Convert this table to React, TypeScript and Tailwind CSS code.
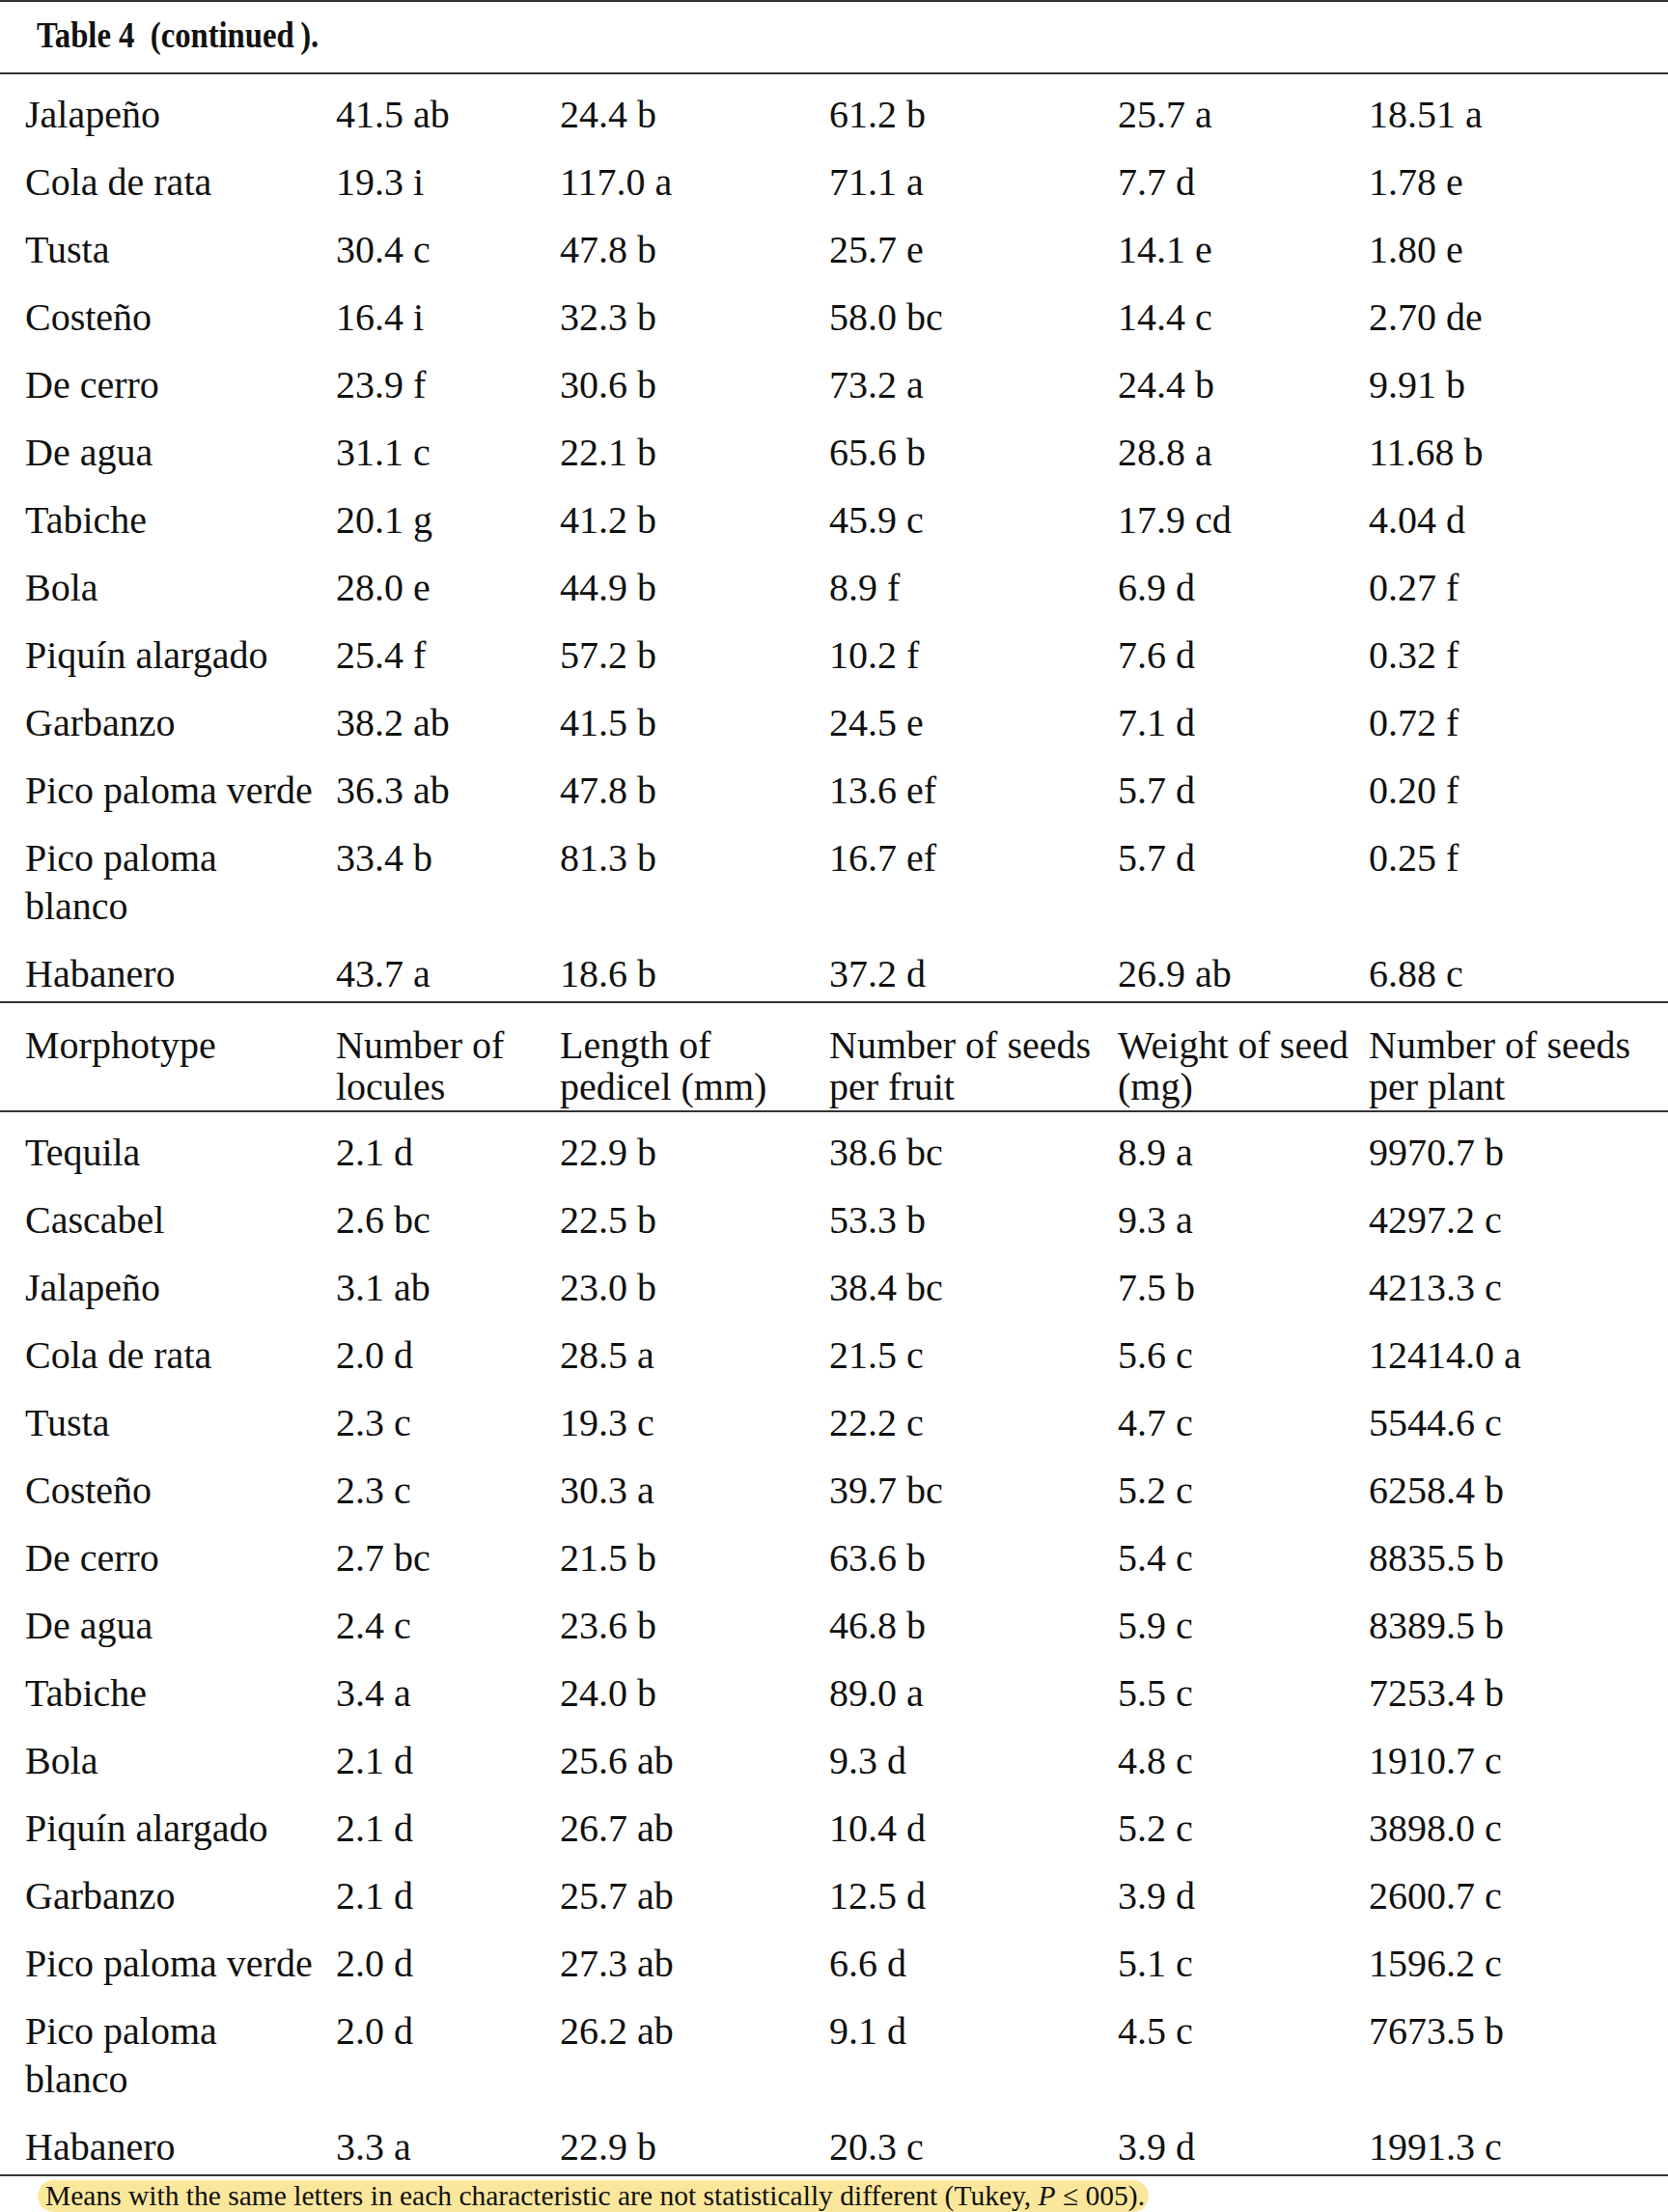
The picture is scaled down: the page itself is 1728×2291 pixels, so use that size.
import React from 'react';

type Row = { name: string[]; vals: string[] };

const top: Row[] = [
  { name: ['Jalapeño'], vals: ['41.5 ab', '24.4 b', '61.2 b', '25.7 a', '18.51 a'] },
  { name: ['Cola de rata'], vals: ['19.3 i', '117.0 a', '71.1 a', '7.7 d', '1.78 e'] },
  { name: ['Tusta'], vals: ['30.4 c', '47.8 b', '25.7 e', '14.1 e', '1.80 e'] },
  { name: ['Costeño'], vals: ['16.4 i', '32.3 b', '58.0 bc', '14.4 c', '2.70 de'] },
  { name: ['De cerro'], vals: ['23.9 f', '30.6 b', '73.2 a', '24.4 b', '9.91 b'] },
  { name: ['De agua'], vals: ['31.1 c', '22.1 b', '65.6 b', '28.8 a', '11.68 b'] },
  { name: ['Tabiche'], vals: ['20.1 g', '41.2 b', '45.9 c', '17.9 cd', '4.04 d'] },
  { name: ['Bola'], vals: ['28.0 e', '44.9 b', '8.9 f', '6.9 d', '0.27 f'] },
  { name: ['Piquín alargado'], vals: ['25.4 f', '57.2 b', '10.2 f', '7.6 d', '0.32 f'] },
  { name: ['Garbanzo'], vals: ['38.2 ab', '41.5 b', '24.5 e', '7.1 d', '0.72 f'] },
  { name: ['Pico paloma verde'], vals: ['36.3 ab', '47.8 b', '13.6 ef', '5.7 d', '0.20 f'] },
  { name: ['Pico paloma', 'blanco'], vals: ['33.4 b', '81.3 b', '16.7 ef', '5.7 d', '0.25 f'] },
  { name: ['Habanero'], vals: ['43.7 a', '18.6 b', '37.2 d', '26.9 ab', '6.88 c'] },
];

const bottom: Row[] = [
  { name: ['Tequila'], vals: ['2.1 d', '22.9 b', '38.6 bc', '8.9 a', '9970.7 b'] },
  { name: ['Cascabel'], vals: ['2.6 bc', '22.5 b', '53.3 b', '9.3 a', '4297.2 c'] },
  { name: ['Jalapeño'], vals: ['3.1 ab', '23.0 b', '38.4 bc', '7.5 b', '4213.3 c'] },
  { name: ['Cola de rata'], vals: ['2.0 d', '28.5 a', '21.5 c', '5.6 c', '12414.0 a'] },
  { name: ['Tusta'], vals: ['2.3 c', '19.3 c', '22.2 c', '4.7 c', '5544.6 c'] },
  { name: ['Costeño'], vals: ['2.3 c', '30.3 a', '39.7 bc', '5.2 c', '6258.4 b'] },
  { name: ['De cerro'], vals: ['2.7 bc', '21.5 b', '63.6 b', '5.4 c', '8835.5 b'] },
  { name: ['De agua'], vals: ['2.4 c', '23.6 b', '46.8 b', '5.9 c', '8389.5 b'] },
  { name: ['Tabiche'], vals: ['3.4 a', '24.0 b', '89.0 a', '5.5 c', '7253.4 b'] },
  { name: ['Bola'], vals: ['2.1 d', '25.6 ab', '9.3 d', '4.8 c', '1910.7 c'] },
  { name: ['Piquín alargado'], vals: ['2.1 d', '26.7 ab', '10.4 d', '5.2 c', '3898.0 c'] },
  { name: ['Garbanzo'], vals: ['2.1 d', '25.7 ab', '12.5 d', '3.9 d', '2600.7 c'] },
  { name: ['Pico paloma verde'], vals: ['2.0 d', '27.3 ab', '6.6 d', '5.1 c', '1596.2 c'] },
  { name: ['Pico paloma', 'blanco'], vals: ['2.0 d', '26.2 ab', '9.1 d', '4.5 c', '7673.5 b'] },
  { name: ['Habanero'], vals: ['3.3 a', '22.9 b', '20.3 c', '3.9 d', '1991.3 c'] },
];

const headers = [
  ['Morphotype'],
  ['Number of', 'locules'],
  ['Length of', 'pedicel (mm)'],
  ['Number of seeds', 'per fruit'],
  ['Weight of seed', '(mg)'],
  ['Number of seeds', 'per plant'],
];

const grid = 'grid grid-cols-[348px_232px_279px_299px_260px_1fr]';

const Rule = () => <div className="h-[2px] w-full bg-[#333]" />;

function Lines({ lines }: { lines: string[] }) {
  return (
    <>
      {lines.map((l, i) => (
        <div key={i} className="whitespace-nowrap">{l}</div>
      ))}
    </>
  );
}

function Body({ rows }: { rows: Row[] }) {
  return (
    <div>
      {rows.map((r, i) => (
        <div key={i} className={`${grid} pt-[17px] pb-[3px]`}>
          <div className="pl-[26px]"><Lines lines={r.name} /></div>
          {r.vals.map((v, j) => (
            <div key={j} className="whitespace-nowrap">{v}</div>
          ))}
        </div>
      ))}
    </div>
  );
}

export default function App() {
  return (
    <div className="w-[1728px] h-[2291px] bg-white text-[#111] font-['Liberation_Serif',serif] text-[40px] leading-[50px] overflow-hidden">
      <Rule />
      <div className="h-[73px] flex items-center pl-[38px] pb-[6px]">
        <span className="inline-block origin-left scale-x-[0.86] font-bold text-[38px] leading-none">
          Table 4&nbsp; (continued&thinsp;).
        </span>
      </div>
      <Rule />
      <Body rows={top} />
      <Rule />
      <div className={`${grid} pt-[22px] pb-[3px] leading-[43px]`}>
        {headers.map((h, i) => (
          <div key={i} className={i === 0 ? 'pl-[26px]' : ''}><Lines lines={h} /></div>
        ))}
      </div>
      <Rule />
      <Body rows={bottom} />
      <Rule />
      <div className="mt-[4px] ml-[39px] flex w-fit h-[33px] items-center rounded-full bg-[#fbe79c] pl-[8px] pr-[4px] text-[29.5px] leading-none whitespace-nowrap">
        Means with the same letters in each characteristic are not statistically different (Tukey,&nbsp;<i>P</i>&nbsp;≤ 005).
      </div>
    </div>
  );
}
